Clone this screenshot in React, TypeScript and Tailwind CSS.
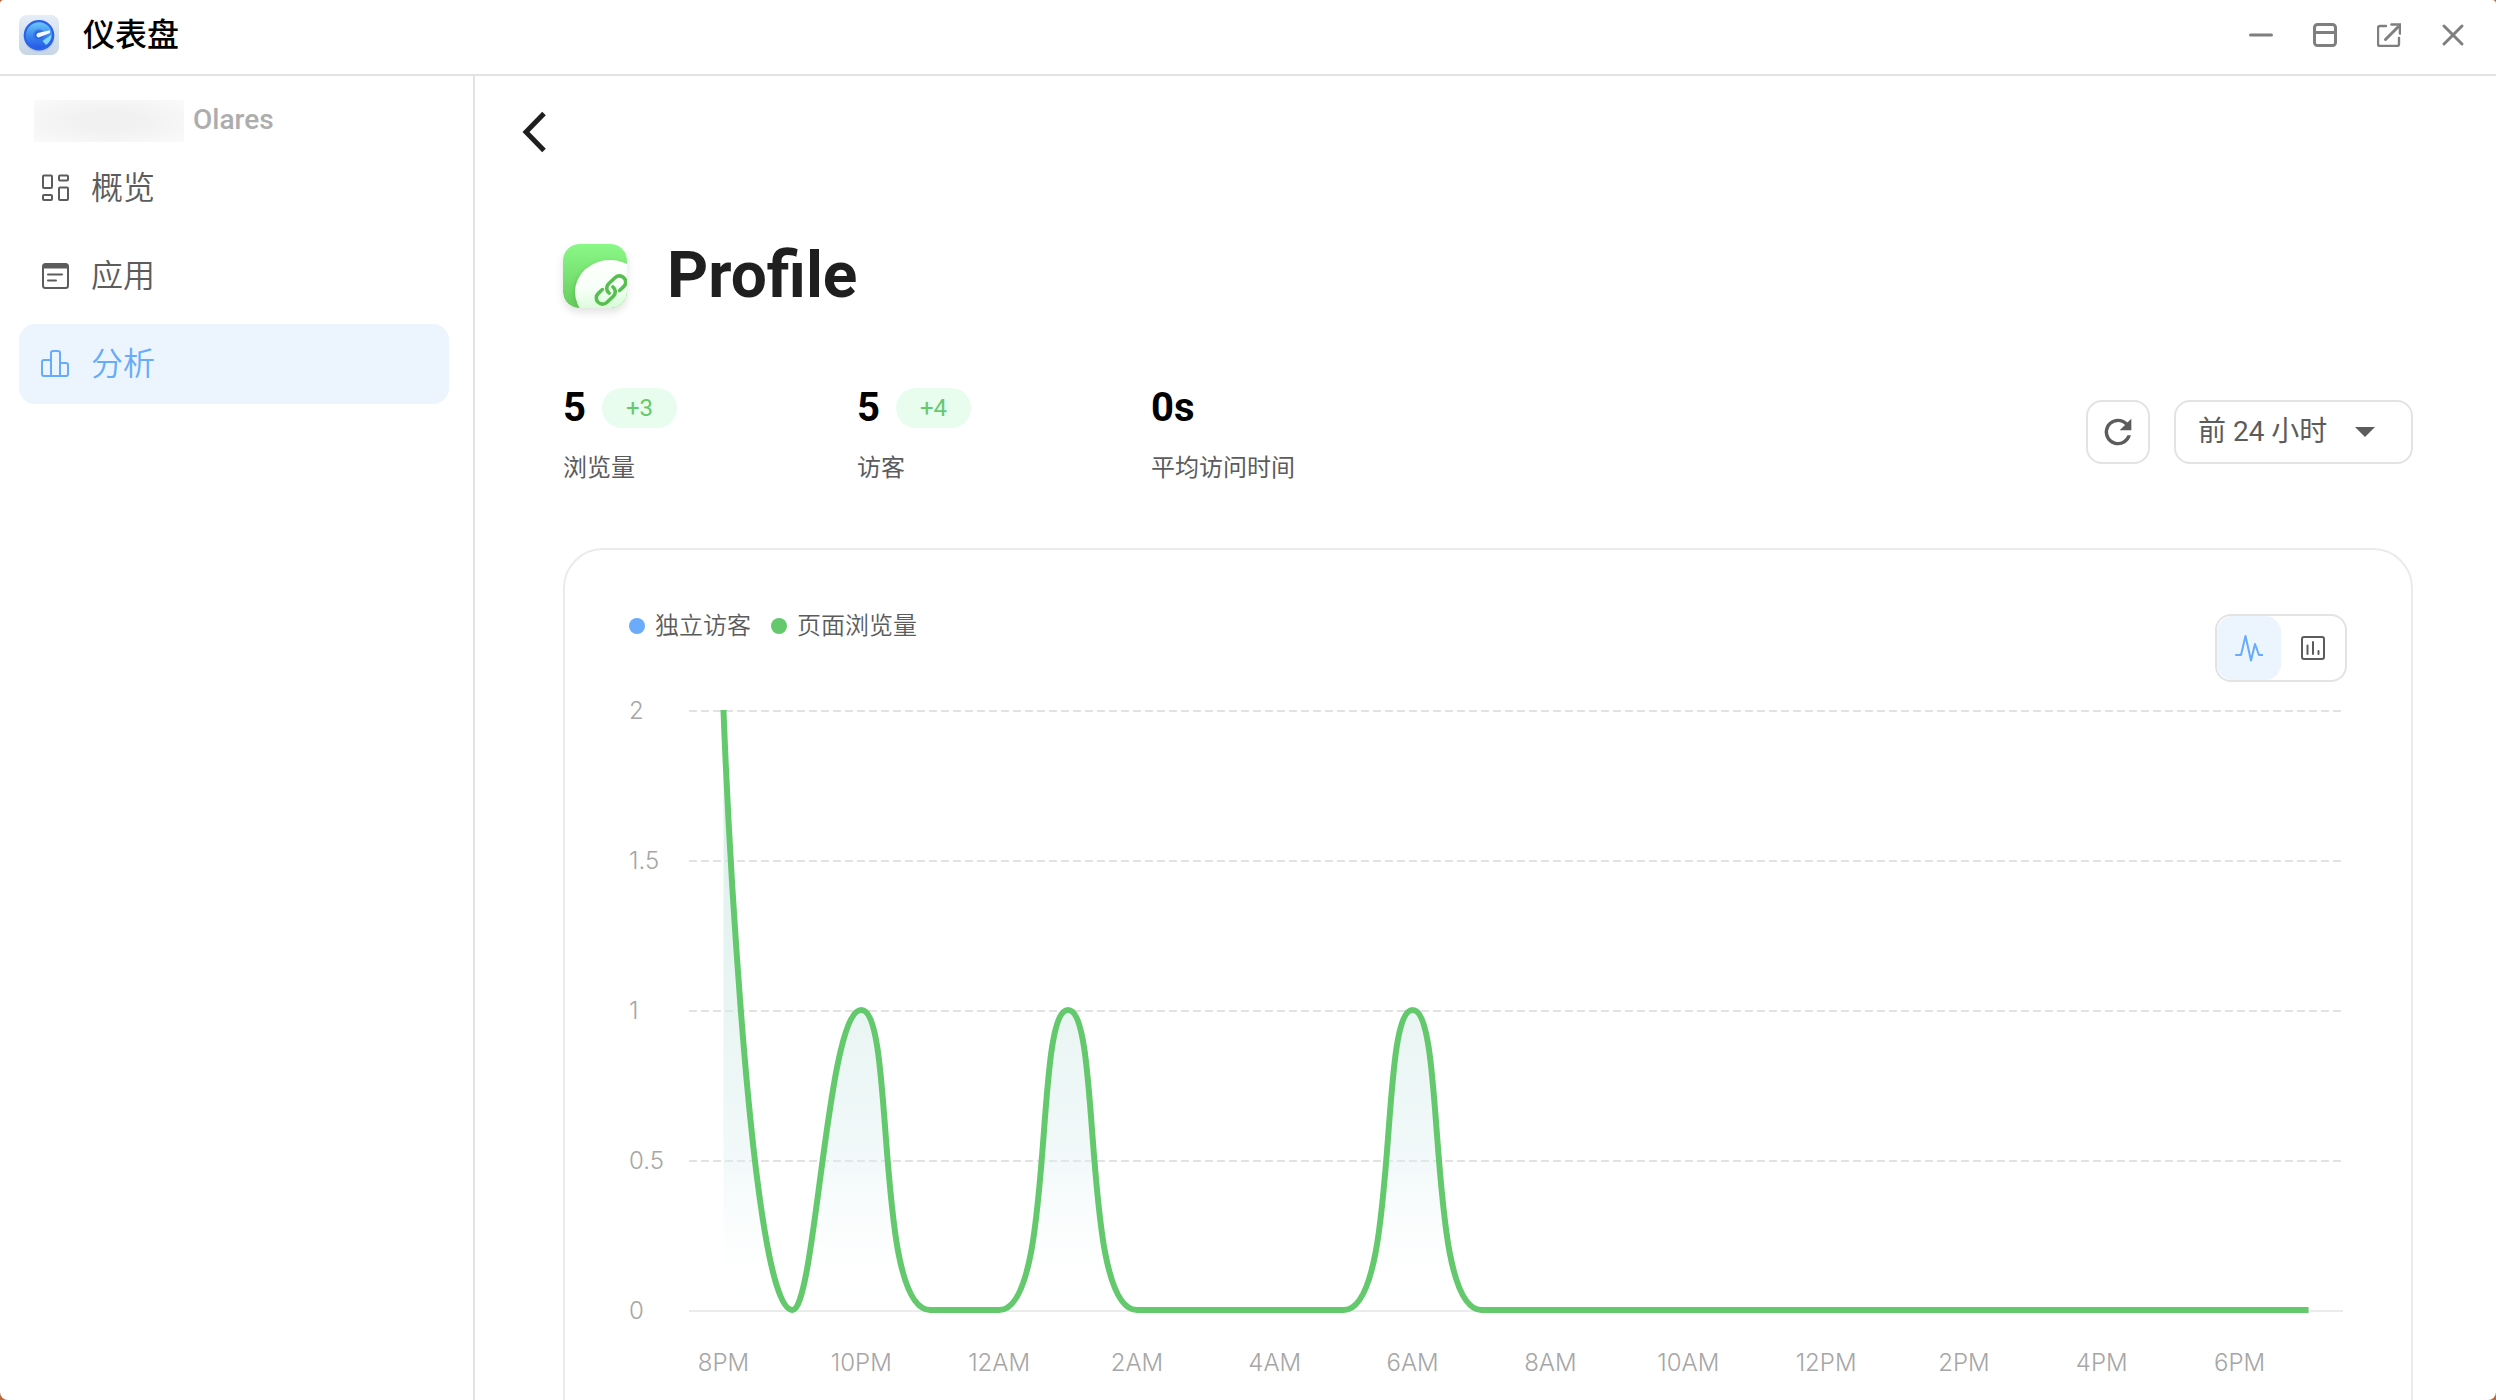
import React, { useEffect, useMemo, useRef, useState } from "react";

const VIEWS = [2, 0, 1, 0, 0, 1, 0, 0, 0, 0, 1, 0, 0, 0, 0, 0, 0, 0, 0, 0, 0, 0, 0, 0];
const HOURS = ["8PM", "10PM", "12AM", "2AM", "4AM", "6AM", "8AM", "10AM", "12PM", "2PM", "4PM", "6PM"];
const TICKS = ["2", "1.5", "1", "0.5", "0"];
const PLOT_HEIGHT = 600;

type Point = [number, number];

const clamp = (v: number, a: number, b: number) => Math.max(Math.min(v, Math.max(a, b)), Math.min(a, b));

/* Smooth path through the points; control points never overshoot a segment. */
function smoothPath(pts: Point[], smooth = 0.5) {
  let [c0x, c0y] = pts[0];
  let d = `M${c0x} ${c0y}`;
  for (let i = 1; i < pts.length; i++) {
    const [px, py] = pts[i - 1];
    const [x, y] = pts[i];
    let c1x = x;
    let c1y = y;
    let n0x = x;
    let n0y = y;
    if (i < pts.length - 1) {
      const [nx, ny] = pts[i + 1];
      const prev = Math.hypot(x - px, y - py);
      const next = Math.hypot(nx - x, ny - y);
      const ratio = next / (next + prev);
      n0x = clamp(x + (nx - px) * smooth * ratio, nx, x);
      n0y = clamp(y + (ny - py) * smooth * ratio, ny, y);
      c1x = clamp(x - ((n0x - x) * prev) / next, px, x);
      c1y = clamp(y - ((n0y - y) * prev) / next, py, y);
      n0x = x + ((x - c1x) * next) / prev;
      n0y = y + ((y - c1y) * next) / prev;
    }
    d += `C${c0x} ${c0y} ${c1x} ${c1y} ${x} ${y}`;
    c0x = n0x;
    c0y = n0y;
  }
  return d;
}

function Plot() {
  const ref = useRef<HTMLDivElement>(null);
  const [width, setWidth] = useState(1655);

  useEffect(() => {
    const el = ref.current;
    if (!el) return;
    const observer = new ResizeObserver(() => setWidth(el.clientWidth));
    observer.observe(el);
    return () => observer.disconnect();
  }, []);

  const { line, area } = useMemo(() => {
    const band = width / VIEWS.length;
    const pts = VIEWS.map((v, i): Point => [band * (i + 0.5), PLOT_HEIGHT * (1 - v / 2)]);
    const path = smoothPath(pts);
    return { line: path, area: `${path}L${pts[pts.length - 1][0]} ${PLOT_HEIGHT}L${pts[0][0]} ${PLOT_HEIGHT}Z` };
  }, [width]);

  return (
    <div ref={ref} className="min-w-0">
      <svg width={width} height={606} className="block" role="img" aria-label="页面浏览量">
        <defs>
          <linearGradient id="area" x1="0" y1="0" x2="0" y2="1">
            <stop offset="0" stopColor="#c9e9e0" stopOpacity="0.75" />
            <stop offset="0.5" stopColor="#d3ebe7" stopOpacity="0.5" />
            <stop offset="0.75" stopColor="#e0f0f2" stopOpacity="0.42" />
            <stop offset="1" stopColor="#ffffff" stopOpacity="0" />
          </linearGradient>
          <clipPath id="frame">
            <rect x="0" y="0" width={width} height="606" />
          </clipPath>
        </defs>
        {[0, 150, 300, 450].map((y) => (
          <line key={y} x1="0" x2={width} y1={y + 1} y2={y + 1} stroke="#e2e2e2" strokeWidth="2" strokeDasharray="8 4" />
        ))}
        <line x1="0" x2={width} y1="601" y2="601" stroke="#ebebeb" strokeWidth="2" />
        <path d={area} fill="url(#area)" />
        <path d={line} fill="none" stroke="#64c96d" strokeWidth="6" strokeLinejoin="bevel" clipPath="url(#frame)" />
      </svg>
      <div className="mt-[31px] flex text-2xl leading-8 font-light text-[#a6a6a6] font-[Inter,sans-serif]">
        {HOURS.map((h) => (
          <div key={h} className="min-w-0 flex-1">
            <div className="w-1/2 text-center whitespace-nowrap">{h}</div>
          </div>
        ))}
      </div>
    </div>
  );
}

function AppLogo() {
  return (
    <svg viewBox="0 0 40 40" className="size-10" aria-hidden="true">
      <defs>
        <linearGradient id="tile" x1="0" y1="0" x2="0" y2="1">
          <stop offset="0" stopColor="#e6edf6" />
          <stop offset="1" stopColor="#c6d5e6" />
        </linearGradient>
        <linearGradient id="dial" x1="0" y1="0" x2="0" y2="1">
          <stop offset="0" stopColor="#6fcdfb" />
          <stop offset="0.55" stopColor="#3a82ee" />
          <stop offset="1" stopColor="#2457e6" />
        </linearGradient>
      </defs>
      <rect width="40" height="40" rx="8" fill="url(#tile)" />
      <circle cx="20" cy="21.5" r="15.5" fill="#9db8e6" opacity="0.5" />
      <circle cx="20" cy="20.3" r="14.2" fill="url(#dial)" stroke="#2b62ea" strokeWidth="2.2" />
      <path d="M32.5 19.5A12.8 12.8 0 0 1 27 30L23.5 26Z" fill="#7fd6fb" />
      <circle cx="20" cy="20" r="6" fill="#2f6fe8" opacity="0.6" />
      <circle cx="20" cy="20" r="4" fill="#2a62dc" />
      <path d="M31 15.200 19.800 17.800A2.300 2.300 0 1 0 20.900 22.100L31 18Z" fill="#f4faff" />
    </svg>
  );
}

function ProfileLogo() {
  return (
    <svg viewBox="0 0 64 64" className="size-16 rounded-2xl shadow-[0_4px_8px_rgba(0,0,0,0.12)]" aria-hidden="true">
      <defs>
        <linearGradient id="leaf" x1="0" y1="0" x2="0" y2="1">
          <stop offset="0" stopColor="#8af886" />
          <stop offset="1" stopColor="#66cc5e" />
        </linearGradient>
        <linearGradient id="bubble" x1="0.4" y1="0" x2="0.55" y2="1">
          <stop offset="0" stopColor="#ffffff" />
          <stop offset="0.4" stopColor="#f8fff8" />
          <stop offset="0.8" stopColor="#d3fbd3" />
        </linearGradient>
        <filter id="soft" x="-30%" y="-30%" width="160%" height="160%">
          <feGaussianBlur stdDeviation="2" />
        </filter>
        <clipPath id="round">
          <rect width="64" height="64" rx="16" />
        </clipPath>
      </defs>
      <g clipPath="url(#round)">
        <rect width="64" height="64" fill="url(#leaf)" />
        <ellipse cx="46" cy="50" rx="35" ry="32" fill="#3fa53a" opacity="0.4" filter="url(#soft)" />
        <ellipse cx="47" cy="48" rx="35" ry="32" fill="url(#bubble)" />
        <g transform="rotate(-43 48 46)" fill="none" stroke="#57bf4f" strokeWidth="3.6" strokeLinecap="round">
          <path d="M42 39.8H36.4A6.2 6.2 0 0 0 36.400 52.200H45.500A6.200 6.200 0 0 0 51.500 45" />
          <path d="M54 52.200H59.600A6.200 6.200 0 0 0 59.600 39.800H50.500A6.200 6.200 0 0 0 44.500 47" />
        </g>
      </g>
    </svg>
  );
}

const iconProps = { fill: "none", stroke: "currentColor", strokeWidth: 2, "aria-hidden": true } as const;

const NAV = [
  {
    label: "概览",
    icon: (
      <svg viewBox="0 0 28 28" className="size-7" {...iconProps}>
        <rect x="2" y="1.5" width="9" height="12.5" rx="1" />
        <rect x="18" y="1.5" width="9" height="5" rx="1" />
        <rect x="2" y="21" width="9" height="5" rx="1" />
        <rect x="18" y="13.5" width="9" height="12.5" rx="1" />
      </svg>
    ),
  },
  {
    label: "应用",
    icon: (
      <svg viewBox="0 0 28 28" className="size-7" {...iconProps}>
        <rect x="2" y="2" width="25" height="24" rx="2.5" />
        <path d="M2 4.5h25" strokeWidth="4" />
        <path d="M7 12.5h14M7 18.5h8" strokeLinecap="round" />
      </svg>
    ),
  },
  {
    label: "分析",
    active: true,
    icon: (
      <svg viewBox="0 0 28 28" className="size-7" {...iconProps} strokeLinejoin="round">
        <path d="M10 26H3a2 2 0 0 1-2-2V12a2 2 0 0 1 2-2h7M10 26V3a2 2 0 0 1 2-2h5a2 2 0 0 1 2 2v23M19 13h6a2 2 0 0 1 2 2v9a2 2 0 0 1-2 2H10" />
      </svg>
    ),
  },
];

const STATS = [
  { value: "5", delta: "+3", label: "浏览量" },
  { value: "5", delta: "+4", label: "访客" },
  { value: "0s", label: "平均访问时间" },
];

export default function App() {
  return (
    <div className="h-screen overflow-hidden bg-[#b8693c] font-[Roboto,'Noto_Sans_CJK_SC',sans-serif]">
      <div className="flex h-full flex-col overflow-hidden rounded-t-sm rounded-b-lg bg-white">
        <header className="flex h-[76px] shrink-0 items-center justify-between border-b-2 border-[#e3e3e3] pr-[27px] pb-1 pl-[19px]">
          <div className="flex items-center gap-6">
            <AppLogo />
            <h1 className="text-[32px] leading-10 font-medium text-black">仪表盘</h1>
          </div>
          <div className="flex items-center gap-8 text-[#7f7f7f]">
            <button type="button" aria-label="最小化" className="flex size-8 items-center justify-center">
              <svg viewBox="0 0 24 24" className="size-6" {...iconProps} strokeWidth={3} strokeLinecap="round">
                <path d="M1.5 12h21" />
              </svg>
            </button>
            <button type="button" aria-label="窗口" className="flex size-8 items-center justify-center">
              <svg viewBox="0 0 24 24" className="size-6" {...iconProps} strokeWidth={3}>
                <rect x="1.5" y="1.5" width="21" height="21" rx="3" />
                <path d="M1.5 9.5h21" />
              </svg>
            </button>
            <button type="button" aria-label="在新窗口打开" className="flex size-8 items-center justify-center">
              <svg viewBox="0 0 24 24" className="size-6" {...iconProps} strokeLinecap="round">
                <path d="M9 3H3a2 2 0 0 0-2 2v16a2 2 0 0 0 2 2h17a2 2 0 0 0 2-2v-6" strokeWidth="2.4" />
                <path d="M8.500 16.500 21 4" strokeWidth="3" />
                <path d="M14.500 1.500h8.500v9" strokeWidth="2.600" />
              </svg>
            </button>
            <button type="button" aria-label="关闭" className="flex size-8 items-center justify-center">
              <svg viewBox="0 0 24 24" className="size-6" {...iconProps} strokeWidth={3} strokeLinecap="round">
                <path d="M3 3l18 18M21 3 3 21" />
              </svg>
            </button>
          </div>
        </header>

        <div className="flex min-h-0 flex-1">
          <aside className="w-[475px] shrink-0 border-r-2 border-[#e3e3e3] px-[19px] pt-6">
            <div className="flex h-[42px] items-start pl-[15px] text-[28px] leading-10 font-medium text-[#adadad]">
              <span className="h-full w-[150px] bg-[radial-gradient(ellipse_at_center,#f1f1f1_30%,#fafafa_100%)]" />
              <span className="ml-[9px]">Olares</span>
            </div>
            <nav className="mt-1.5 flex flex-col gap-2 pr-[5px]">
              {NAV.map((item) => (
                <a
                  key={item.label}
                  href="#"
                  className={
                    item.active
                      ? "flex h-20 items-center gap-[22px] rounded-2xl bg-[#ecf4fe] px-[22px] text-[32px] leading-10 text-[#67abfb]"
                      : "flex h-20 items-center gap-[22px] rounded-2xl px-[22px] text-[32px] leading-10 text-[#5c5c5c]"
                  }
                >
                  {item.icon}
                  <span className="font-[350]">{item.label}</span>
                </a>
              ))}
            </nav>
          </aside>

          <main className="min-w-0 flex-1 overflow-hidden">
            <button type="button" aria-label="返回" className="mt-8 ml-9 flex size-12 items-center justify-center text-[#1f1f1f]">
              <svg viewBox="0 0 48 48" className="size-12" {...iconProps} strokeWidth={5}>
                <path d="M33 5.500 15 24 33 42.500" />
              </svg>
            </button>

            <div className="mt-20 pr-[83px] pl-[88px]">
              <div className="flex h-20 items-center gap-10">
                <ProfileLogo />
                <h2 className="text-[64px] leading-[80px] font-bold text-[#1f1f1f]">Profile</h2>
              </div>

              <div className="mt-[68px] flex items-start justify-between">
                <dl className="flex">
                  {STATS.map((s) => (
                    <div key={s.label} className="flex w-[294px] flex-col-reverse">
                      <dt className="mt-5 text-2xl leading-8 text-[#5c5c5c]">{s.label}</dt>
                      <dd className="flex h-12 items-center gap-4 text-[40px] leading-[48px] font-bold text-black">
                        {s.value}
                        {s.delta && (
                          <span className="flex h-10 items-center rounded-full bg-[#e8fdee] px-6 text-2xl leading-8 font-normal text-[#64c96d]">
                            {s.delta}
                          </span>
                        )}
                      </dd>
                    </div>
                  ))}
                </dl>
                <div className="mt-4 flex gap-6">
                  <button
                    type="button"
                    aria-label="刷新"
                    className="flex size-16 items-center justify-center rounded-2xl border-2 border-[#e3e3e3] text-[#5c5c5c]"
                  >
                    <svg viewBox="0 0 24 24" className="size-10" fill="currentColor" aria-hidden="true">
                      <path d="M17.650 6.350A7.958 7.958 0 0 0 12 4a8 8 0 1 0 7.730 10h-2.080A6 6 0 1 1 12 6c1.660 0 3.140.690 4.220 1.780L13 11h7V4l-2.350 2.350z" />
                    </svg>
                  </button>
                  <div className="relative flex items-center text-[#5c5c5c]">
                    <select
                      aria-label="时间范围"
                      className="h-16 w-[239px] appearance-none rounded-2xl border-2 border-[#e3e3e3] bg-white pl-[22px] text-[28px] leading-10 font-normal"
                    >
                      <option>前 24 小时</option>
                    </select>
                    <svg viewBox="0 0 20 10" className="pointer-events-none absolute right-[38px] h-2.5 w-5" fill="currentColor" aria-hidden="true">
                      <path d="M0 0h20L10 10z" />
                    </svg>
                  </div>
                </div>
              </div>

              <section className="mt-16 rounded-[40px] border-2 border-[#ebebeb] p-16">
                <div className="flex items-start justify-between">
                  <ul className="flex h-6 items-center gap-5 text-2xl font-[350] text-[#5c5c5c]">
                    <li className="flex items-center gap-2.5">
                      <span className="size-4 rounded-full bg-[#6aabfb]" />
                      独立访客
                    </li>
                    <li className="flex items-center gap-2.5">
                      <span className="size-4 rounded-full bg-[#64c96d]" />
                      页面浏览量
                    </li>
                  </ul>
                  <div className="flex h-[68px] w-[132px] overflow-hidden rounded-2xl border-2 border-[#e3e3e3]">
                    <button type="button" aria-label="折线图" className="flex flex-1 items-center justify-center rounded-2xl bg-[#ecf4fe] text-[#67abfb]">
                      <svg viewBox="0 0 28 28" className="size-7" {...iconProps} strokeLinecap="round" strokeLinejoin="round">
                        <path d="M1 21h5L10.500 2 16 26.500 20 10l4 11h3.500" />
                      </svg>
                    </button>
                    <button type="button" aria-label="柱状图" className="flex flex-1 items-center justify-center text-[#5c5c5c]">
                      <svg viewBox="0 0 24 24" className="size-6" {...iconProps}>
                        <rect x="1" y="1" width="22" height="22" rx="2" />
                        <path d="M6.500 9.500v8.500M12 6v12M17.500 15v3" strokeLinecap="round" />
                      </svg>
                    </button>
                  </div>
                </div>
                <div className="mt-7 flex pr-1">
                  <div className="flex h-[602px] w-[60px] shrink-0 flex-col justify-between text-2xl leading-8 font-light text-[#a6a6a6] font-[Inter,sans-serif]">
                    {TICKS.map((t) => (
                      <div key={t} className="flex h-0.5 items-center">
                        {t}
                      </div>
                    ))}
                  </div>
                  <div className="min-w-0 flex-1">
                    <Plot />
                  </div>
                </div>
              </section>
            </div>
          </main>
        </div>
      </div>
    </div>
  );
}
